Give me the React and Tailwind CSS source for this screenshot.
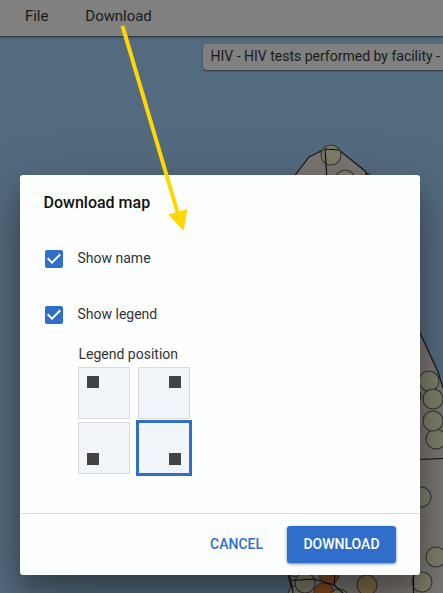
import React from "react";

const sites = [
  [331, 155, 10, "#7d7e69"],
  [345, 180, 10, "#7d7e69"],
  [411, 396, 10, "#7d7e69"],
  [429, 381, 10, "#7d7e69"],
  [433, 399, 10, "#7d7e69"],
  [436, 439, 10, "#7d7e69"],
  [433, 421, 10, "#7d7e69"],
  [421, 497, 10, "#7d7e69"],
  [436, 557, 10, "#7d7e69"],
  [422, 582, 10, "#7d7e69"],
  [367, 585, 10, "#84704a"],
  [298, 595, 10, "#7d7e69"],
  [296, 569, 8, "#7d7e69"],
  [329, 574, 10, "#874b20"],
  [324, 593, 10, "#874b20"],
  [305, 583, 10, "#7d7e69"],
  [339, 599, 10, "#7d7e69"],
];

function MapCanvas() {
  return (
    <svg className="absolute inset-0" width="443" height="593" viewBox="0 0 443 593">
      <rect width="443" height="593" fill="#546b7f" />
      <path
        d="M290 182L309 157L325 149L339 150L365 171L370 180L420 333L438 372L444 391V594H293L288 575Z"
        fill="#7b7672"
        stroke="#161616"
        strokeWidth="1.2"
      />
      {sites.map(([x, y, r, fill]) => (
        <circle key={`${x}-${y}`} cx={x} cy={y} r={r} fill={fill} stroke="#353530" strokeWidth="1.1" />
      ))}
      <path
        d="M325 149L327 180M325 149L339 150M365 174H370M418 459.5L443 458.5M413.500 570V593M289 574L291 581L293 593M291 580.500L314 579L334 585L343 593M335 570L334.500 585"
        fill="none"
        stroke="#111"
        strokeWidth="1.2"
      />
    </svg>
  );
}

function Check({ label }) {
  return (
    <label className="flex h-6 items-center">
      <svg width="24" height="24" viewBox="0 0 24 24" fill="#2f6fcb">
        <path d="M19 3H5c-1.110 0-2 .9-2 2v14c0 1.100.89 2 2 2h14c1.110 0 2-.9 2-2V5c0-1.100-.89-2-2-2zm-9 14l-5-5 1.410-1.410L10 14.170l7.590-7.590L19 8l-9 9z" />
      </svg>
      <span className="ml-[11.500px] pb-0.5 text-[14px] leading-6 text-[#333]">{label}</span>
    </label>
  );
}

function Cell({ className, selected }) {
  return (
    <div
      className={`flex h-[52px] w-[52px] border border-[#dcdcdc] bg-[#f1f4f8] p-2 ${className} ${
        selected ? "outline-3 -outline-offset-1 outline-[#2f6fcb]" : ""
      }`}
    >
      <div className="h-3 w-3 bg-[#434343]" />
    </div>
  );
}

export default function App() {
  return (
    <div className="relative h-[593px] w-[443px] overflow-hidden bg-[#546b7f] font-['Roboto',sans-serif]">
      <MapCanvas />
      <header className="relative flex h-9 items-center gap-[37px] bg-[#808080] pb-[3px] pl-[25px] text-[15px] tracking-[-0.05px] text-[#1b1b1b] shadow-[0_1px_2px_rgba(0,0,0,0.6)]">
        <span>File</span>
        <span>Download</span>
      </header>
      <div className="relative mt-2 ml-[203px] flex h-[26px] w-[280px] items-center rounded-[4px] bg-[#808080] pb-0.5 pl-[7.500px] text-[14px] whitespace-nowrap text-[#1b1b1b] shadow-[0_1px_2px_rgba(0,0,0,0.5)]">
        HIV - HIV tests performed by facility -
      </div>

      <div className="absolute top-[175px] left-5 flex h-[400px] w-[400px] flex-col rounded-[3px] bg-[#fdfefe] shadow-[0_19px_60px_rgba(0,0,0,0.3),0_15px_20px_rgba(0,0,0,0.22)]">
        <div className="flex-1 px-6 pt-4">
          <h2 className="-ml-[0.500px] text-[16px] leading-6 font-medium text-[#111]">Download map</h2>
          <div className="mt-8 -ml-0.5 flex flex-col gap-8">
            <Check label="Show name" />
            <Check label="Show legend" />
          </div>
          <div className="mt-[15px] ml-[34px]">
            <div className="h-[25px] pl-[0.500px] text-[14px] leading-6 text-[#333]">Legend position</div>
            <div className="grid w-[112px] grid-cols-2 gap-x-2 gap-y-[3px]">
              <Cell className="items-start justify-start" />
              <Cell className="items-start justify-end" />
              <Cell className="items-end justify-start" />
              <Cell className="items-end justify-end" selected />
            </div>
          </div>
        </div>
        <footer className="flex h-[62px] items-start justify-end gap-6 border-t border-[#d5dadd] pt-3 pr-6 text-[14px] font-medium">
          <button className="h-[37px] text-[#2f6fcb]">CANCEL</button>
          <button className="h-[37px] w-[109px] rounded-[3px] bg-[#2f6fcb] text-white shadow-[0_1px_3px_rgba(0,0,0,0.5)]">
            DOWNLOAD
          </button>
        </footer>
      </div>

      <svg className="pointer-events-none absolute inset-0" width="443" height="593" viewBox="0 0 443 593">
        <path d="M122.500 26L178 214" stroke="#ffd700" strokeWidth="4" />
        <path d="M168.500 214.500L187.500 209L183.500 231Z" fill="#ffd700" />
      </svg>
    </div>
  );
}
